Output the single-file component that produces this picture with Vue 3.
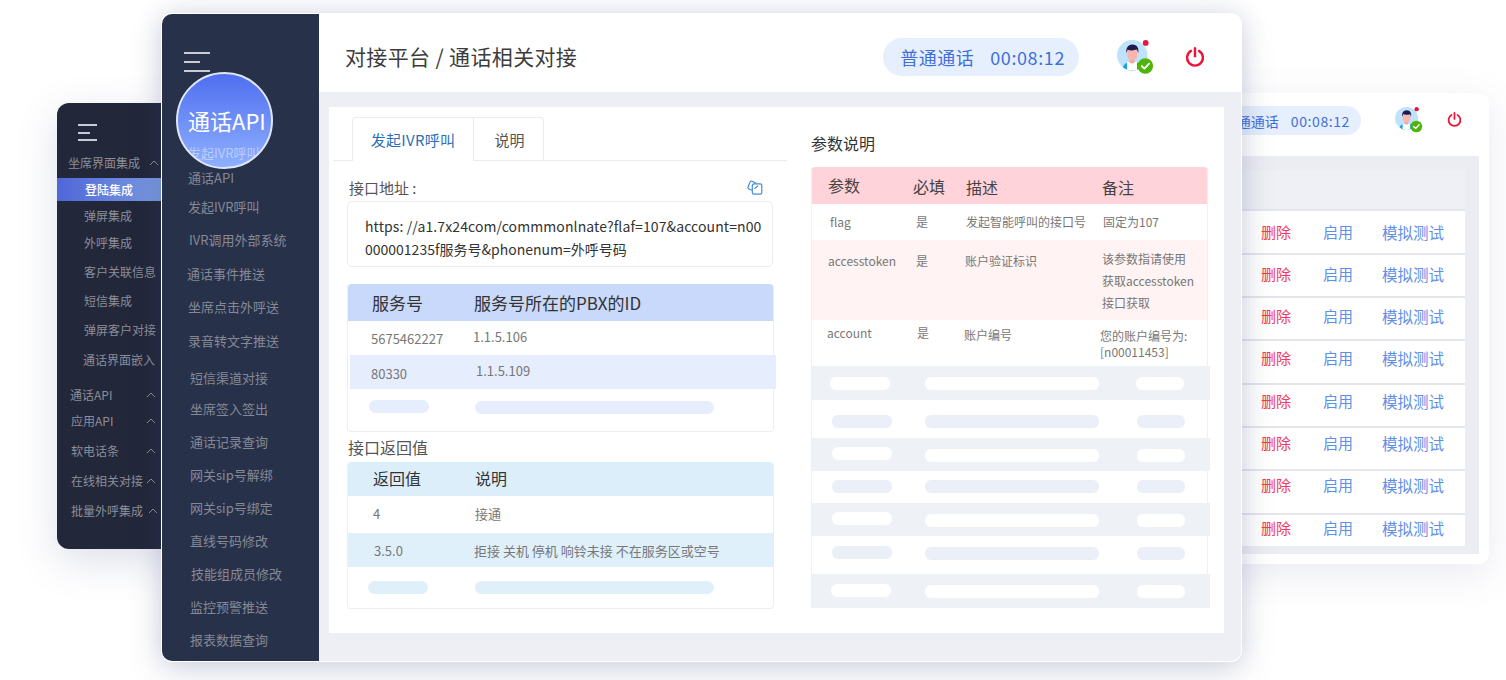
<template>
  <div class="stage">
    <!-- 图标定义 -->
    <svg class="defs" width="0" height="0">
      <defs>
        <clipPath id="avatar-clip"><circle cx="15.3" cy="15.3" r="15.3" /></clipPath>
        <symbol id="avatar" viewBox="0 0 37 36">
          <circle cx="15.3" cy="15.3" r="15.3" fill="#bfe3fb" />
          <g clip-path="url(#avatar-clip)">
            <path d="M5 32c0-6 3-9 7-10h7c4 1 7 4 7 10z" fill="#19a3e0" />
            <path d="M10 22h10v10H10z" fill="#fff" />
            <path d="M12.6 17h5v5.5c-1 1.2-4 1.2-5 0z" fill="#f4a8a4" />
            <path d="M10.3 10h10v5c0 3.6-2.4 5.4-5 5.4s-5-1.8-5-5.4z" fill="#fbb4ae" />
            <path d="M9.4 13c-.6-4 1-8.6 6-8.6s6.8 4.4 5.8 8.6l-1.2-3.4c-3 1-6.6 1-9.4.2z" fill="#1d1a4e" />
          </g>
          <circle cx="28.7" cy="2.9" r="2.9" fill="#e8173a" />
          <circle cx="28.3" cy="26" r="7.8" fill="#4fb40a" />
          <path d="M24.7 26l2.7 2.6 4.7-4.9" fill="none" stroke="#fff" stroke-width="1.8" stroke-linecap="round" stroke-linejoin="round" />
        </symbol>
        <symbol id="power" viewBox="0 0 20 20">
          <path d="M6 3.9a7.9 7.9 0 1 0 8 0" fill="none" stroke="#e6193b" stroke-width="2.4" stroke-linecap="round" />
          <path d="M10 1.2v8" fill="none" stroke="#e6193b" stroke-width="2.4" stroke-linecap="round" />
        </symbol>
        <symbol id="chevron" viewBox="0 0 10 6">
          <path d="M1 5l4-4 4 4" fill="none" stroke="#8b8e99" stroke-width="1" />
        </symbol>
      </defs>
    </svg>

    <!-- 左侧后层窗口 -->
    <aside class="win-left">
      <div class="burger burger-sm"><i></i><i></i><i></i></div>
      <div
        v-for="item in leftMenu"
        :key="item.text"
        class="left-item"
        :class="{ active: item.active }"
        :style="{ marginTop: item.gap + 'px', paddingLeft: item.x + 'px' }"
      >
        <span>{{ item.text }}</span>
        <svg v-if="item.arrow" class="chevron" :style="{ left: item.arrow + 'px' }"><use href="#chevron" /></svg>
      </div>
    </aside>

    <!-- 右侧后层窗口 -->
    <section class="win-right">
      <header class="right-head">
        <div class="pill pill-sm"><span>普通通话</span><span class="time">00:08:12</span></div>
        <svg class="avatar-sm"><use href="#avatar" /></svg>
        <svg class="power-sm"><use href="#power" /></svg>
      </header>
      <div class="right-body">
        <div class="right-table">
          <div class="right-top"></div>
          <div
            v-for="(h, i) in rightRows"
            :key="i"
            class="right-row"
            :style="{ height: h + 'px', paddingTop: (i ? 10 - i : 11) + 'px' }"
          >
            <span class="act-del">删除</span>
            <span class="act-on">启用</span>
            <span class="act-test">模拟测试</span>
          </div>
        </div>
      </div>
    </section>

    <!-- 主窗口 -->
    <main class="win-main">
      <aside class="side">
        <div class="burger"><i></i><i></i><i></i></div>
        <div class="bubble">
          <span class="bubble-title">通话API</span>
          <span class="bubble-sub">发起IVR呼叫</span>
        </div>
        <nav class="side-menu">
          <div
            v-for="item in mainMenu"
            :key="item.text"
            class="side-item"
            :style="{ marginTop: item.gap + 'px', paddingLeft: item.x + 'px' }"
          >{{ item.text }}</div>
        </nav>
      </aside>

      <div class="main-col">
        <header class="main-head">
          <h1 class="page-title">对接平台 / 通话相关对接</h1>
          <div class="pill pill-lg"><span class="label">普通通话</span><span class="time">00:08:12</span></div>
          <svg class="avatar"><use href="#avatar" /></svg>
          <svg class="power"><use href="#power" /></svg>
        </header>

        <div class="main-body">
          <div class="card">
            <!-- 左栏 -->
            <div class="col-left">
              <div class="tabs">
                <div class="tab active">发起IVR呼叫</div>
                <div class="tab">说明</div>
              </div>

              <div class="addr-label">
                <span>接口地址 :</span>
                <svg class="copy" viewBox="0 0 16 15">
                  <path d="M5 10.2L2 9C1 8.6.7 7.7 1.1 6.8L2.9 2.4C3.3 1.3 4.2.9 5.1 1.3L9.6 3.5" fill="none" stroke="#4a8bd8" stroke-width="1.2" stroke-linejoin="round" />
                  <rect x="5.3" y="3.8" width="9.5" height="10.3" rx="1.7" fill="#fff" stroke="#4a8bd8" stroke-width="1.2" />
                  <path d="M7.8 8.5L10.8 5.9" fill="none" stroke="#4a8bd8" stroke-width="1.1" stroke-linecap="round" />
                </svg>
              </div>
              <div class="addr-box">
                <span class="addr-first">https: //a1.7x24com/commmonlnate?flaf=107&amp;account=n00</span><br />000001235f服务号&amp;phonenum=外呼号码
              </div>

              <div class="mini-table blue">
                <div class="mini-head">
                  <span class="c1">服务号</span>
                  <span>服务号所在的PBX的ID</span>
                </div>
                <div class="mini-row">
                  <span class="c1 low">5675462227</span>
                  <span class="high">1.1.5.106</span>
                </div>
                <div class="mini-row stripe">
                  <span class="c1 low">80330</span>
                  <span class="high">1.1.5.109</span>
                </div>
                <div class="mini-row skeleton">
                  <i class="bar short"></i>
                  <i class="bar long"></i>
                </div>
              </div>

              <div class="return-title">接口返回值</div>
              <div class="mini-table sky">
                <div class="mini-head">
                  <span class="c1">返回值</span>
                  <span>说明</span>
                </div>
                <div class="mini-row r37">
                  <span class="c1">4</span>
                  <span>接通</span>
                </div>
                <div class="mini-row stripe">
                  <span class="c1">3.5.0</span>
                  <span>拒接 关机 停机 响铃未接 不在服务区或空号</span>
                </div>
                <div class="mini-row skeleton">
                  <i class="bar short"></i>
                  <i class="bar long"></i>
                </div>
              </div>
            </div>

            <!-- 右栏 -->
            <div class="col-right">
              <div class="param-title">参数说明</div>
              <div class="param-table">
                <div class="param-row param-head">
                  <span v-for="c in paramHead" :key="c.t" :style="cellStyle(c)">{{ c.t }}</span>
                </div>
                <div
                  v-for="row in paramRows"
                  :key="row.cells[0].t"
                  class="param-row"
                  :class="row.cls"
                  :style="{ height: row.h + 'px' }"
                >
                  <span v-for="c in row.cells" :key="c.t" :style="cellStyle(c)">
                    <template v-for="(line, i) in c.t.split('|')" :key="i"><div :style="{ lineHeight: (c.lh || 16) + 'px' }">{{ line }}</div></template>
                  </span>
                </div>
                <div
                  v-for="(row, i) in skeletonRows"
                  :key="i"
                  class="skel-row"
                  :class="{ gray: i % 2 === 0 }"
                  :style="{ height: row.h + 'px' }"
                >
                  <i class="skel w60" :style="{ left: row.x + 'px', top: row.a + 'px' }"></i>
                  <i class="skel w174" :style="{ top: row.b + 'px' }"></i>
                  <i class="skel w48" :style="{ left: row.z + 'px', top: row.b + 'px' }"></i>
                </div>
              </div>
            </div>
          </div>
        </div>
      </div>
    </main>
  </div>
</template>

<script setup>
// 左侧菜单，gap 是与上一项的间距
const leftMenu = [
  { text: '坐席界面集成', x: 11, gap: 13, arrow: 92 },
  { text: '登陆集成', x: 28, gap: 6, active: true },
  { text: '弹屏集成', x: 27, gap: 6 },
  { text: '外呼集成', x: 27, gap: 9 },
  { text: '客户关联信息', x: 27, gap: 11 },
  { text: '短信集成', x: 27, gap: 11 },
  { text: '弹屏客户对接', x: 27, gap: 11 },
  { text: '通话界面嵌入', x: 26, gap: 12 },
  { text: '通话API', x: 13, gap: 17, arrow: 89 },
  { text: '应用API', x: 14, gap: 8, arrow: 89 },
  { text: '软电话条', x: 14, gap: 12, arrow: 89 },
  { text: '在线相关对接', x: 14, gap: 12, arrow: 89 },
  { text: '批量外呼集成', x: 14, gap: 12, arrow: 91 }
]

const mainMenu = [
  { text: '通话API', x: 26, gap: 0 },
  { text: '发起IVR呼叫', x: 26, gap: 9 },
  { text: 'IVR调用外部系统', x: 27, gap: 13 },
  { text: '通话事件推送', x: 25, gap: 14 },
  { text: '坐席点击外呼送', x: 26, gap: 13 },
  { text: '录音转文字推送', x: 26, gap: 14 },
  { text: '短信渠道对接', x: 28, gap: 17 },
  { text: '坐席签入签出', x: 28, gap: 11 },
  { text: '通话记录查询', x: 28, gap: 13 },
  { text: '网关sip号解绑', x: 28, gap: 13 },
  { text: '网关sip号绑定', x: 28, gap: 13 },
  { text: '直线号码修改', x: 28, gap: 13 },
  { text: '技能组成员修改', x: 29, gap: 13 },
  { text: '监控预警推送', x: 28, gap: 13 },
  { text: '报表数据查询', x: 28, gap: 13 }
]

const rightRows = [44, 43, 43, 44, 43, 43, 44, 33]

const paramHead = [
  { t: '参数', x: 17, y: 8 },
  { t: '必填', x: 102, y: 9 },
  { t: '描述', x: 155, y: 10 },
  { t: '备注', x: 291, y: 10 }
]

// x、y 是单元格相对行的位置
const paramRows = [
  {
    h: 36,
    cells: [
      { t: 'flag', x: 19, y: 10 },
      { t: '是', x: 105, y: 10 },
      { t: '发起智能呼叫的接口号', x: 155, y: 10 },
      { t: '固定为107', x: 292, y: 10 }
    ]
  },
  {
    h: 80,
    cls: 'pink',
    cells: [
      { t: 'accesstoken', x: 17, y: 13 },
      { t: '是', x: 105, y: 13 },
      { t: '账户验证标识', x: 154, y: 13 },
      { t: '该参数指请使用|获取accesstoken|接口获取', x: 291, y: 8, lh: 22 }
    ]
  },
  {
    h: 46,
    cells: [
      { t: 'account', x: 16, y: 5 },
      { t: '是', x: 106, y: 5 },
      { t: '账户编号', x: 153, y: 7 },
      { t: '您的账户编号为:|[n00011453]', x: 289, y: 8 }
    ]
  }
]

const skeletonRows = [
  { h: 34, x: 19, a: 11, b: 11, z: 325 },
  { h: 38, x: 21, a: 15, b: 15, z: 326 },
  { h: 33, x: 21, a: 9, b: 11, z: 326 },
  { h: 32, x: 21, a: 9, b: 9, z: 326 },
  { h: 33, x: 21, a: 9, b: 11, z: 326 },
  { h: 38, x: 21, a: 10, b: 11, z: 326 },
  { h: 34, x: 20, a: 10, b: 11, z: 326 }
]

const cellStyle = (c) => ({ left: c.x + 'px', top: c.y + 'px' })
</script>

<style scoped>
.stage {
  position: relative;
  width: 1506px;
  height: 680px;
  overflow: hidden;
  background: #fff;
  font-family: "Noto Sans CJK SC", "Noto Sans", sans-serif;
}

.defs {
  position: absolute;
}

/* 汉堡图标 */
.burger {
  display: flex;
  flex-direction: column;
  gap: 7px;
  width: 26px;
  margin: 38px 0 0 22px;
}

.burger i {
  display: block;
  height: 2px;
  background: #c9ccd8;
}

.burger i:nth-child(2) {
  width: 16px;
}

.burger-sm {
  width: 19px;
  gap: 5.5px;
  margin: 21px 0 0 21px;
}

.burger-sm i:nth-child(2) {
  width: 12px;
}

/* 左窗口 */
.win-left {
  position: absolute;
  left: 57px;
  top: 103px;
  width: 120px;
  height: 446px;
  border-radius: 12px;
  background: #23273a;
  box-shadow: 0 12px 40px rgba(70, 85, 140, 0.18);
}

.left-item {
  position: relative;
  height: 18px;
  line-height: 18px;
  font-size: 12px;
  color: #8b8e99;
  white-space: nowrap;
}

.left-item.active {
  height: 23px;
  line-height: 23px;
  color: #fff;
  font-weight: 500;
  background: linear-gradient(90deg, #4f67d9, #7c9ce0 90%);
}

.left-item.active + .left-item {
  margin-top: 6px;
}

.chevron {
  position: absolute;
  top: 6px;
  width: 10px;
  height: 6px;
}

/* 右窗口 */
.win-right {
  position: absolute;
  left: 1000px;
  top: 93px;
  width: 489px;
  height: 471px;
  padding: 0 10px 10px 0;
  box-sizing: border-box;
  display: flex;
  flex-direction: column;
  border-radius: 10px;
  background: #fff;
  box-shadow: 0 10px 40px rgba(70, 85, 140, 0.12);
}

.right-head {
  display: flex;
  align-items: center;
  justify-content: flex-end;
  height: 63px;
  flex-shrink: 0;
  padding: 0 17px 8px 0;
  box-sizing: border-box;
}

.avatar-sm {
  width: 28px;
  height: 27px;
  margin-left: 34px;
}

.power-sm {
  width: 15px;
  height: 15px;
  margin: -2px 0 0 24px;
}

.right-body {
  flex: 1;
  background: #ecedf3;
  padding: 14px 14px 8px 0;
}

.right-top {
  height: 39px;
  background: #eef0f5;
}

.right-row {
  display: flex;
  align-items: flex-start;
  box-sizing: border-box;
  background: #fff;
  border-top: 2px solid #e4e6ec;
  font-size: 15px;
  line-height: 20px;
}

.act-del {
  margin-left: 261px;
  width: 62px;
  color: #f0395a;
}

.act-on {
  width: 59px;
  color: #5d8fe8;
}

.act-test {
  font-size: 15.5px;
  color: #5d8fe8;
}

/* 通话状态 */
.pill {
  display: flex;
  align-items: center;
  gap: 16px;
  height: 38px;
  border-radius: 19px;
  background: #e6effd;
  color: #3f6fdb;
  font-size: 18px;
}

.pill-lg {
  padding: 0 14px 0 17px;
}

.label {
  letter-spacing: 0.5px;
}

.time {
  letter-spacing: 0.6px;
}

.pill-sm {
  height: 29px;
  gap: 12px;
  padding: 0 11px 0 15px;
  border-radius: 15px;
  font-size: 14px;
}

/* 主窗口 */
.win-main {
  position: absolute;
  left: 162px;
  top: 14px;
  width: 1079px;
  height: 647px;
  display: flex;
  border-radius: 10px;
  overflow: hidden;
  box-shadow: 0 0 0 1px #fff, 0 0 24px rgba(60, 72, 130, 0.18), 0 12px 36px rgba(60, 72, 130, 0.15);
}

.side {
  position: relative;
  width: 157px;
  flex-shrink: 0;
  background: #27314a;
}

.bubble {
  position: absolute;
  left: 14px;
  top: 58px;
  width: 97px;
  height: 97px;
  box-sizing: border-box;
  border: 2px solid #dfe6fb;
  border-radius: 50%;
  overflow: hidden;
  background: linear-gradient(180deg, #4f6fef, #8fb0ff);
}

.bubble-title {
  position: absolute;
  left: 10px;
  top: 31px;
  font-size: 22px;
  line-height: 30px;
  color: #fff;
  white-space: nowrap;
}

.bubble-sub {
  position: absolute;
  left: 10px;
  top: 70px;
  font-size: 13px;
  line-height: 18px;
  color: rgba(255, 255, 255, 0.45);
  white-space: nowrap;
}

.side-menu {
  position: absolute;
  left: 0;
  right: 0;
  top: 154px;
}

.side-item {
  height: 20px;
  line-height: 20px;
  font-size: 13px;
  color: #868995;
  white-space: nowrap;
}

.main-col {
  flex: 1;
  min-width: 0;
  display: flex;
  flex-direction: column;
  background: #fff;
}

.main-head {
  display: flex;
  align-items: center;
  height: 78px;
  flex-shrink: 0;
  padding: 8px 36px 0 26px;
  box-sizing: border-box;
}

.page-title {
  flex: 1;
  margin: -2px 0 0;
  font-size: 21px;
  font-weight: 400;
  letter-spacing: 0.35px;
  color: #3c3c3c;
  white-space: nowrap;
}

.avatar {
  width: 37px;
  height: 36px;
  margin: 2px 0 0 38px;
}

.power {
  width: 20px;
  height: 20px;
  margin-left: 31px;
}

.main-body {
  flex: 1;
  min-height: 0;
  padding: 15px 17px 28px 10px;
  background: #eeeff4;
}

.card {
  display: flex;
  height: 100%;
  background: #fff;
}

/* 左栏 */
.col-left {
  width: 454px;
  margin-left: 4px;
  flex-shrink: 0;
}

.tabs {
  display: flex;
  height: 54px;
  padding: 10px 0 0 19px;
  box-sizing: border-box;
  border-bottom: 1px solid #e9ebf1;
}

.tab {
  display: flex;
  align-items: center;
  justify-content: center;
  width: 70px;
  height: 43px;
  padding-left: 2px;
  box-sizing: border-box;
  border: 1px solid #e9ebf1;
  border-bottom: none;
  border-left: none;
  border-radius: 0 4px 0 0;
  font-size: 15px;
  color: #555;
}

.tab.active {
  width: 122px;
  height: 44px;
  padding-left: 0;
  border-left: 1px solid #e9ebf1;
  border-radius: 4px 0 0 0;
  letter-spacing: 0.3px;
  color: #2a6fb8;
  background: #fff;
}

.addr-label {
  display: flex;
  justify-content: space-between;
  align-items: center;
  width: 414px;
  height: 22px;
  margin: 15px 0 0 16px;
  font-size: 15px;
  color: #555;
}

.copy {
  width: 16px;
  height: 15px;
}

.addr-box {
  width: 426px;
  height: 66px;
  margin: 3px 0 0 14px;
  padding: 13px 0 0 17px;
  box-sizing: border-box;
  border: 1px solid #e9ebf1;
  border-radius: 5px;
  font-size: 14px;
  line-height: 23px;
  color: #333;
  white-space: nowrap;
}

.addr-first {
  letter-spacing: 0.1px;
}

.mini-table {
  position: relative;
  width: 427px;
  margin-left: 14px;
  box-sizing: border-box;
  border: 1px solid #eceef3;
  border-top: none;
  border-radius: 4px;
  font-size: 13px;
  color: #777;
}

.mini-table.blue {
  height: 148px;
  margin-top: 17px;
}

.mini-table.sky {
  height: 147px;
}

.mini-head {
  display: flex;
  align-items: center;
  font-size: 17px;
  color: #333;
  border-radius: 4px 4px 0 0;
}

.blue .mini-head {
  height: 37px;
  background: #c8d9fb;
}

.sky .mini-head {
  height: 34px;
  padding-bottom: 2px;
  box-sizing: border-box;
  font-size: 16px;
  background: #ddeefb;
}

.c1 {
  width: 102px;
  flex-shrink: 0;
  margin-left: 24px;
}

.sky .c1 {
  margin-left: 25px;
}

.mini-row {
  display: flex;
  align-items: center;
  height: 34px;
}

.mini-row.r37 {
  height: 37px;
  padding-bottom: 2px;
  box-sizing: border-box;
}

.sky .stripe .c1 {
  width: 100px;
  margin-left: 26px;
}

.blue .stripe {
  position: relative;
  width: 426px;
  margin-left: 2px;
  background: #e6edfc;
}

.blue .stripe .c1 {
  margin-left: 21px;
  margin-right: 3px;
}

.sky .stripe {
  background: #e0f0fb;
}

.low {
  position: relative;
  left: -1px;
}

.high {
  position: relative;
  top: -2px;
  left: -1px;
}

.stripe .low {
  top: 1px;
  left: 0;
}

.stripe .high {
  left: 0;
}

.skeleton {
  height: auto;
  align-items: flex-start;
  padding-top: 11px;
}

.bar {
  display: block;
  height: 13px;
  border-radius: 7px;
  background: #e6edfc;
}

.sky .bar {
  background: #e0f0fb;
}

.bar.short {
  width: 60px;
  margin: 0 46px 0 21px;
}

.bar.long {
  width: 239px;
}

.blue .bar.long {
  margin-top: 1px;
}

.sky .bar.short {
  margin: 0 47px 0 20px;
}

.sky .skeleton {
  padding-top: 14px;
}

.return-title {
  height: 30px;
  line-height: 30px;
  margin-left: 15px;
  font-size: 16px;
  color: #555;
}

/* 右栏 */
.col-right {
  width: 397px;
  margin-left: 24px;
  flex-shrink: 0;
}

.param-title {
  height: 60px;
  padding-top: 24px;
  box-sizing: border-box;
  font-size: 16px;
  line-height: 24px;
  color: #333;
}

.param-table {
  width: 397px;
  font-size: 12px;
  color: #777;
}

.param-row,
.skel-row {
  position: relative;
  box-shadow: inset 1px 0 #eef0f4, inset -1px 0 #eef0f4;
}

.param-row > span {
  position: absolute;
  white-space: nowrap;
}

.param-head {
  height: 37px;
  border-radius: 4px 4px 0 0;
  background: #ffd3d9;
  font-size: 16px;
  line-height: 20px;
  color: #444;
}

.pink {
  background: #fff3f3;
}

.skel-row.gray {
  margin-right: -2px;
  background: #eef1f6;
}

.skel {
  position: absolute;
  left: 114px;
  height: 13px;
  border-radius: 6px;
  background: #ebeff7;
}

.gray .skel {
  background: #fff;
}

.w60 {
  width: 60px;
}

.w174 {
  width: 174px;
}

.w48 {
  width: 48px;
}
</style>

<style>
html,
body {
  margin: 0;
  background: #fff;
}
</style>
